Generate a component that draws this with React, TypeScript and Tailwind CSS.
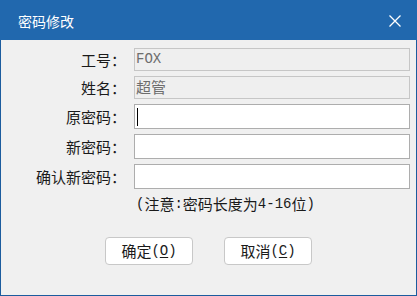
import React from 'react';

const cjk = { fontFamily: '"Noto Sans CJK SC", sans-serif' };
const mono = { fontFamily: '"Liberation Mono", monospace' };

function Row({ label, children, h }: { label: string; children: React.ReactNode; h: string }) {
  return (
    <div className={`flex items-center ${h}`}>
      <div className="w-[125px] shrink-0 text-right text-[15px] leading-none text-[#1a1a1a]">
        {label}
      </div>
      <div className="ml-[8px] h-full w-[276px]">{children}</div>
    </div>
  );
}

function Latin({ children }: { children: React.ReactNode }) {
  return (
    <span className="text-[14px]" style={mono}>
      {children}
    </span>
  );
}

export default function App() {
  return (
    <div
      className="flex h-[296px] w-[417px] flex-col border-x border-b border-[#1c5c9e] bg-[#f0f0f0]"
      style={cjk}
    >
      <div className="-mx-px flex h-[40px] shrink-0 items-center justify-between bg-[#2168ae] pl-[18px] pr-[16px]">
        <span className="mt-[2px] text-[14px] leading-none text-white">密码修改</span>
        <svg width="12" height="12" viewBox="0 0 12 12" className="mt-[1px]">
          <path d="M0.5 0.5 L11.5 11.5 M11.5 0.5 L0.5 11.5" stroke="#fff" strokeWidth="1.3" />
        </svg>
      </div>

      <div className="flex flex-col pt-[8px]">
        <div className="flex flex-col gap-[5px]">
          <Row label="工号：" h="h-[23px]">
            <div className="flex h-full items-center border border-[#c6c6c6] bg-[#efefef] pl-[1px] text-[14px] text-[#6d6d6d]" style={mono}>
              FOX
            </div>
          </Row>
          <Row label="姓名：" h="h-[23px]">
            <div className="flex h-full items-center border border-[#c6c6c6] bg-[#efefef] pl-[1px] text-[15px] text-[#6d6d6d]">
              超管
            </div>
          </Row>
          <Row label="原密码：" h="h-[25px]">
            <div className="flex h-full items-center border border-[#adadad] bg-white pl-[2px]">
              <span className="h-[18px] w-px bg-black" />
            </div>
          </Row>
          <Row label="新密码：" h="h-[25px]">
            <div className="h-full border border-[#adadad] bg-white" />
          </Row>
          <Row label="确认新密码：" h="h-[25px]">
            <div className="h-full border border-[#adadad] bg-white" />
          </Row>
        </div>

        <div className="mt-[2px] flex h-[26px] items-center pl-[135px] text-[15px] text-[#1a1a1a]">
          <Latin>(</Latin>注意<Latin>:</Latin>密码长度为<Latin>4-16</Latin>位<Latin>)</Latin>
        </div>

        <div className="mt-[20px] flex gap-[31px] pl-[104px]">
          <button className="flex h-[28px] w-[88px] items-center justify-center rounded-[4px] border border-[#c8c8c8] bg-white text-[15px] text-[#1a1a1a]">
            确定
            <Latin>
              (<span className="underline underline-offset-2">O</span>)
            </Latin>
          </button>
          <button className="flex h-[28px] w-[88px] items-center justify-center rounded-[4px] border border-[#c8c8c8] bg-white text-[15px] text-[#1a1a1a]">
            取消
            <Latin>
              (<span className="underline underline-offset-2">C</span>)
            </Latin>
          </button>
        </div>
      </div>
    </div>
  );
}
